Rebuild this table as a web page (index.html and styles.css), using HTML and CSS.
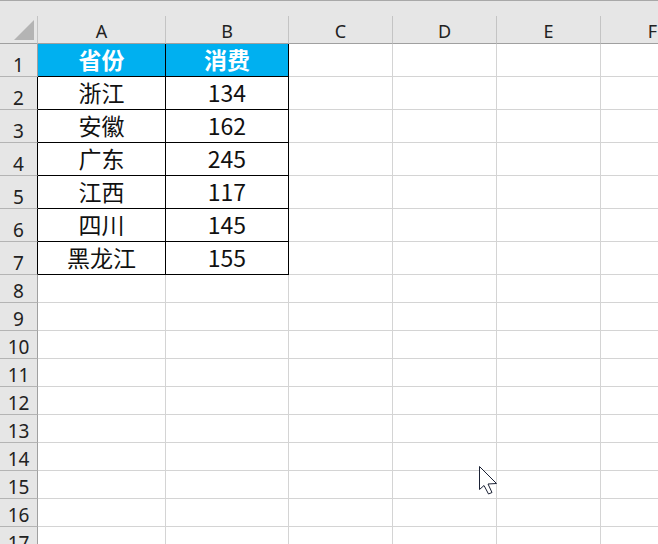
FILE: index.html
```html
<!DOCTYPE html>
<html lang="zh-CN">
<head>
<meta charset="utf-8">
<title>Sheet</title>
<link rel="stylesheet" href="styles.css">
</head>
<body>
<div class="sheet">
  <div class="topline"></div>
  <div class="topgap"></div>
  <div class="row colhead">
    <div class="c corner"><span class="tri"></span></div>
    <div class="c ch">A</div>
    <div class="c ch">B</div>
    <div class="c ch">C</div>
    <div class="c ch">D</div>
    <div class="c ch">E</div>
    <div class="c ch">F</div>
  </div>
  <div class="row tall">
    <div class="c rh">1</div>
    <div class="c t th">省份</div>
    <div class="c t th">消费</div>
    <div class="c"></div><div class="c"></div><div class="c"></div><div class="c"></div>
  </div>
  <div class="row tall">
    <div class="c rh rt">2</div>
    <div class="c t">浙江</div>
    <div class="c t">134</div>
    <div class="c"></div><div class="c"></div><div class="c"></div><div class="c"></div>
  </div>
  <div class="row tall">
    <div class="c rh rt">3</div>
    <div class="c t">安徽</div>
    <div class="c t">162</div>
    <div class="c"></div><div class="c"></div><div class="c"></div><div class="c"></div>
  </div>
  <div class="row tall">
    <div class="c rh rt">4</div>
    <div class="c t">广东</div>
    <div class="c t">245</div>
    <div class="c"></div><div class="c"></div><div class="c"></div><div class="c"></div>
  </div>
  <div class="row tall">
    <div class="c rh rt">5</div>
    <div class="c t">江西</div>
    <div class="c t">117</div>
    <div class="c"></div><div class="c"></div><div class="c"></div><div class="c"></div>
  </div>
  <div class="row tall">
    <div class="c rh rt">6</div>
    <div class="c t">四川</div>
    <div class="c t">145</div>
    <div class="c"></div><div class="c"></div><div class="c"></div><div class="c"></div>
  </div>
  <div class="row tall">
    <div class="c rh rt">7</div>
    <div class="c t">黑龙江</div>
    <div class="c t">155</div>
    <div class="c"></div><div class="c"></div><div class="c"></div><div class="c"></div>
  </div>
  <div class="row"><div class="c rh">8</div><div class="c"></div><div class="c"></div><div class="c"></div><div class="c"></div><div class="c"></div><div class="c"></div></div>
  <div class="row"><div class="c rh">9</div><div class="c"></div><div class="c"></div><div class="c"></div><div class="c"></div><div class="c"></div><div class="c"></div></div>
  <div class="row"><div class="c rh">10</div><div class="c"></div><div class="c"></div><div class="c"></div><div class="c"></div><div class="c"></div><div class="c"></div></div>
  <div class="row"><div class="c rh">11</div><div class="c"></div><div class="c"></div><div class="c"></div><div class="c"></div><div class="c"></div><div class="c"></div></div>
  <div class="row"><div class="c rh">12</div><div class="c"></div><div class="c"></div><div class="c"></div><div class="c"></div><div class="c"></div><div class="c"></div></div>
  <div class="row"><div class="c rh">13</div><div class="c"></div><div class="c"></div><div class="c"></div><div class="c"></div><div class="c"></div><div class="c"></div></div>
  <div class="row"><div class="c rh">14</div><div class="c"></div><div class="c"></div><div class="c"></div><div class="c"></div><div class="c"></div><div class="c"></div></div>
  <div class="row"><div class="c rh">15</div><div class="c"></div><div class="c"></div><div class="c"></div><div class="c"></div><div class="c"></div><div class="c"></div></div>
  <div class="row"><div class="c rh">16</div><div class="c"></div><div class="c"></div><div class="c"></div><div class="c"></div><div class="c"></div><div class="c"></div></div>
  <div class="row"><div class="c rh">17</div><div class="c"></div><div class="c"></div><div class="c"></div><div class="c"></div><div class="c"></div><div class="c"></div></div>
  <svg class="cursor" width="20" height="30" viewBox="0 0 20 30" aria-hidden="true">
    <polygon points="0.5,0.5 0.5,23.5 5,19.5 9.5,28 13,26.5 9,18 17.5,17.5" fill="#ffffff" stroke="#1b2235" stroke-width="1" stroke-linejoin="miter"/>
  </svg>
</div>
</body>
</html>
```

FILE: styles.css
```css
* { box-sizing: border-box; }
html, body { margin: 0; padding: 0; background: #ffffff; }
body { width: 658px; height: 544px; overflow: hidden; }
.sheet { position: relative; width: 658px; height: 544px; overflow: hidden; }
.topline { height: 1px; background: #a8a8a8; }
.topgap { height: 15px; background: #e6e6e6; }
.row {
  display: grid;
  grid-template-columns: 38px 128px 123px 104px 104px 104px 104px;
  height: 28px;
  width: 705px;
}
.row.tall { height: 33px; }
.c {
  border-right: 1px solid #d4d4d4;
  border-bottom: 1px solid #d4d4d4;
  display: flex;
  align-items: center;
  justify-content: center;
  min-width: 0;
}
.colhead .c {
  background: #e6e6e6;
  border-right-color: #c4c4c4;
  border-bottom-color: #a0a0a0;
}
.ch {
  font-family: "Noto Sans", "Open Sans", sans-serif;
  font-size: 18px;
  color: #222222;
  line-height: 1;
  padding-top: 3px;
}
.corner { position: relative; }
.tri {
  position: absolute;
  left: 14px;
  top: 4px;
  width: 0;
  height: 0;
  border-left: 20px solid transparent;
  border-bottom: 20px solid #b4b4b4;
}
.rh {
  background: #e6e6e6;
  border-right-color: #a0a0a0;
  border-bottom-color: #b4b4b4;
  font-family: "Noto Sans", "Open Sans", sans-serif;
  font-size: 19px;
  color: #222222;
  line-height: 1;
  align-items: flex-end;
  padding-bottom: 1px;
}
.rh.rt { border-right-color: #000000; }
.t {
  border-right-color: #000000;
  border-bottom-color: #000000;
  font-family: "Noto Sans CJK SC", "Noto Sans", sans-serif;
  font-size: 23px;
  color: #111111;
  line-height: 1;
  padding-bottom: 2px;
}
.th {
  background: #00b0f0;
  color: #ffffff;
  font-weight: 700;
}
.cursor { position: absolute; left: 479px; top: 466px; }
```
